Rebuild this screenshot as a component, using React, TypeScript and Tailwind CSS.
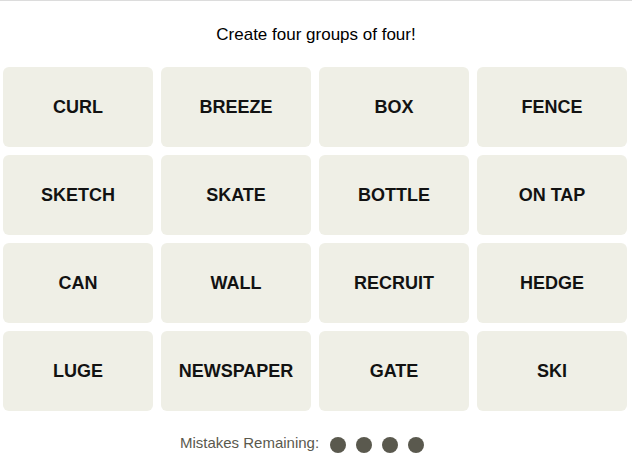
const WORDS = [
  'CURL', 'BREEZE', 'BOX', 'FENCE',
  'SKETCH', 'SKATE', 'BOTTLE', 'ON TAP',
  'CAN', 'WALL', 'RECRUIT', 'HEDGE',
  'LUGE', 'NEWSPAPER', 'GATE', 'SKI',
];

export default function App() {
  return (
    <div className="min-h-[457px] w-[632px] border-t border-[#dcdcdc] bg-white font-['Liberation_Sans',Arial,sans-serif] text-black">
      <p className="pt-[24px] text-center text-[17px] leading-[20px]">Create four groups of four!</p>

      <div className="mt-[22px] grid grid-cols-[repeat(4,150px)] gap-2 pl-[3px]">
        {WORDS.map((w) => (
          <button
            key={w}
            className="flex h-[80px] items-center justify-center rounded-md bg-[#efefe6] text-[18px] font-bold uppercase text-[#121212]"
          >
            {w}
          </button>
        ))}
      </div>

      <div className="mt-[23px] flex items-center justify-center gap-[10px] pr-[28px]">
        <span className="mb-[3px] mr-[1px] text-[15px] leading-[18px] text-[#5a594e]">Mistakes Remaining:</span>
        {[0, 1, 2, 3].map((i) => (
          <span key={i} className="h-4 w-4 rounded-full bg-[#5a594e]" />
        ))}
      </div>
    </div>
  );
}
